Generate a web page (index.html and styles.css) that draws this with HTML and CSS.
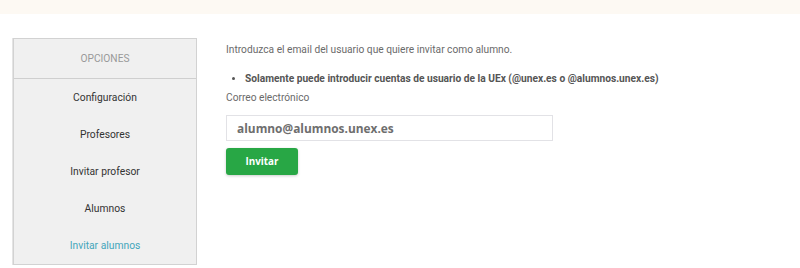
FILE: index.html
```html
<!DOCTYPE html>
<html lang="es">
<head>
<meta charset="utf-8">
<title>Invitar alumnos</title>
<link rel="stylesheet" href="styles.css">
</head>
<body>
<div class="topband"></div>
<div class="page">
  <aside class="panel">
    <div class="panel-head">OPCIONES</div>
    <ul class="menu">
      <li><a href="#">Configuración</a></li>
      <li><a href="#">Profesores</a></li>
      <li><a href="#">Invitar profesor</a></li>
      <li><a href="#">Alumnos</a></li>
      <li><a href="#" class="active">Invitar alumnos</a></li>
    </ul>
  </aside>
  <main class="content">
    <p class="intro">Introduzca el email del usuario que quiere invitar como alumno.</p>
    <ul class="notes">
      <li>Solamente puede introducir cuentas de usuario de la UEx (@unex.es o @alumnos.unex.es)</li>
    </ul>
    <label class="label" for="email">Correo electrónico</label>
    <input id="email" class="input" type="text" value="alumno@alumnos.unex.es">
    <button class="btn" type="button">Invitar</button>
  </main>
</div>
</body>
</html>
```
FILE: styles.css
```css
html, body {
  margin: 0;
  padding: 0;
  background: #ffffff;
  font-family: Roboto, "Liberation Sans", sans-serif;
}
.topband {
  height: 14px;
  background: #fdf9f3;
}
.page {
  display: flex;
  align-items: flex-start;
  padding: 24px 0 0 13px;
  gap: 29px;
}
.panel {
  width: 182px;
  background: #f0f0f0;
  border: 1px solid #d2d2d2;
  box-shadow: -1px 0 0 #e4e4e4;
}
.panel-head {
  height: 39px;
  line-height: 39px;
  text-align: center;
  font-size: 10.2px;
  color: #999999;
  border-bottom: 1px solid #cfcfcf;
}
.menu {
  list-style: none;
  margin: 0;
  padding: 0;
}
.menu li a {
  display: block;
  height: 37px;
  line-height: 37px;
  text-align: center;
  font-size: 10.3px;
  color: #333333;
  text-decoration: none;
}
.menu li a.active {
  color: #44a6bb;
}
.content {
  display: flex;
  flex-direction: column;
  align-items: flex-start;
  padding-top: 4px;
}
.intro {
  margin: 0;
  font-size: 10.2px;
  line-height: 16px;
  color: #6a6a6a;
}
.notes {
  margin: 13px 0 0 0;
  padding-left: 19px;
  font-size: 10.2px;
  line-height: 16px;
  color: #555555;
  font-weight: bold;
}
.label {
  margin-top: 3px;
  font-size: 10.2px;
  line-height: 16px;
  color: #6a6a6a;
}
.input {
  box-sizing: border-box;
  margin-top: 9px;
  width: 327px;
  height: 26px;
  border: 1px solid #e2e2e6;
  padding: 0 10px;
  font-family: "Open Sans", sans-serif;
  font-weight: 700;
  font-size: 11.9px;
  color: #6e6e6e;
  outline: none;
}
.btn {
  margin-top: 7px;
  width: 72px;
  height: 27px;
  border: none;
  border-radius: 3px;
  background: #28a745;
  color: #ffffff;
  font-family: "Open Sans", sans-serif;
  font-weight: 700;
  font-size: 9.8px;
  box-shadow: 0 1px 3px rgba(0,0,0,0.2);
  padding: 0;
}
```
